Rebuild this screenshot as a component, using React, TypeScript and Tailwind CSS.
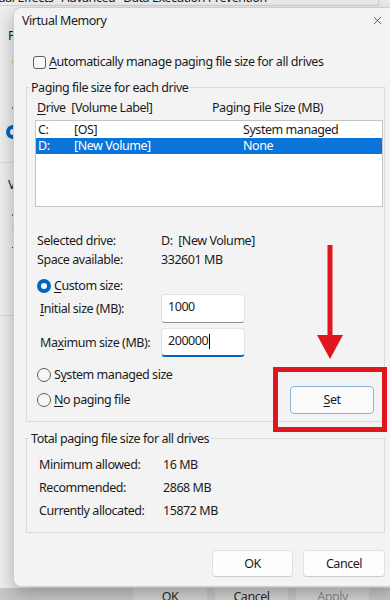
import { X } from 'lucide-react';

function Radio({ on }: { on?: boolean }) {
  if (on)
    return (
      <span className="flex h-[14px] w-[14px] shrink-0 items-center justify-center rounded-full bg-[#0067c0]">
        <span className="h-[6px] w-[6px] rounded-full bg-white" />
      </span>
    );
  return <span className="h-[14px] w-[14px] shrink-0 rounded-full border border-[#5d5d5d] bg-[#f6f6f6]" />;
}

function Key({ c }: { c: string }) {
  return <span className="underline decoration-[1px] underline-offset-[2px]">{c}</span>;
}

export default function App() {
  return (
    <div className="relative h-[600px] w-[390px] overflow-hidden bg-[#eeeeee] font-['Noto_Sans',sans-serif] text-[12.5px] leading-[16px] tracking-[-0.45px] text-[#1b1b1b]">
      {/* parent window: Performance Options */}
      <div className="flex h-full flex-col">
        <div className="-mt-[9px] flex h-[15px] w-[379px] items-center border-r border-b border-[#d4d4d4] whitespace-nowrap">
          <span className="-ml-[2px]">ual Effects</span>
          <span className="ml-[8px]">Advanced</span>
          <span className="ml-[8px]">Data Execution Prevention</span>
        </div>
        <div className="mt-[22px] h-[16px] pl-[8px]">Processor scheduling</div>
        <div className="mt-[10px] h-[16px] pl-[12px]">Choose how to allocate processor resources.</div>
        <div className="mt-[27px] h-[16px] pl-[12px]">Adjust for best performance of:</div>
        <div className="mt-[11px] flex h-[16px] items-center gap-[4px] pl-[6px]">
          <Radio on />
          <span>Programs</span>
        </div>
        <div className="mt-[22px] border-t border-[#dadada]" />
        <div className="mt-[14px] h-[16px] pl-[8px]">Virtual memory</div>
        <div className="mt-[11px] h-[16px] pl-[12px]">A paging file is an area on the hard disk that Windows uses as</div>
        <div className="h-[16px] pl-[12px]">if it were RAM.</div>
        <div className="mt-[8px] h-[16px] pl-[12px]">Total paging file size for all drives: 15872 MB</div>
        <div className="mt-[55px] border-t border-[#dadada]" />
        <div className="mt-auto flex h-[12px] gap-[8px] bg-[#c7c7c7] pl-[133px]">
          <div className="flex h-[20px] w-[74px] justify-center bg-[#d3d3d3] leading-[18px] text-[#2a2a2a]">OK</div>
          <div className="flex h-[20px] w-[73px] justify-center bg-[#d3d3d3] leading-[18px] text-[#2a2a2a]">Cancel</div>
          <div className="flex h-[20px] w-[73px] justify-center bg-[#d3d3d3] leading-[18px] text-[#8a8a8a]">Apply</div>
        </div>
      </div>

      {/* Virtual Memory dialog */}
      <div className="absolute top-[7px] left-[13px] flex h-[580px] w-[385px] flex-col rounded-[8px] border border-[#cdcdcd] bg-[#f3f3f3] shadow-[0_6px_18px_rgba(0,0,0,0.28)]">
        <div className="flex h-[25px] items-center justify-between pr-[13px] pl-[8px]">
          <span>Virtual Memory</span>
          <X size={13} strokeWidth={1.2} className="text-[#1b1b1b]" />
        </div>

        <div className="mt-[19px] flex h-[20px] items-center gap-[3px] pl-[19px]">
          <span className="h-[13px] w-[13px] rounded-[3px] border border-[#5d5d5d] bg-[#f8f8f8]" />
          <span>
            <Key c="A" />utomatically manage paging file size for all drives
          </span>
        </div>

        <fieldset className="mx-[12px] mt-[7px] border border-[#dadada] pr-[1px] pb-[7px] pl-[8px]">
          <legend className="-ml-[6px] px-[2px] leading-[17px]">Paging file size for each drive</legend>
          <div className="mt-[4px] flex h-[16px]">
            <span className="w-[177px] pl-[2px] whitespace-pre">
              <Key c="D" />rive  [Volume Label]
            </span>
            <span>Paging File Size (MB)</span>
          </div>
          <div className="mt-[4px] h-[87px] border border-[#c4c4c4] bg-white pt-[1px]">
            <div className="flex h-[16px]">
              <span className="w-[38px] pl-[2px]">C:</span>
              <span className="w-[169px]">[OS]</span>
              <span>System managed</span>
            </div>
            <div className="flex h-[16px] bg-[#0a74d8] text-white">
              <span className="w-[38px] pl-[2px]">D:</span>
              <span className="w-[169px]">[New Volume]</span>
              <span>None</span>
            </div>
          </div>

          <div className="mt-[24px] flex h-[19px] items-center">
            <span className="w-[126px] pl-[2px]">Selected drive:</span>
            <span className="whitespace-pre">D:  [New Volume]</span>
          </div>
          <div className="flex h-[19px] items-center">
            <span className="w-[126px] pl-[2px]">Space available:</span>
            <span>332601 MB</span>
          </div>

          <div className="mt-[8px] flex h-[17px] items-center gap-[3px] pl-[2px]">
            <Radio on />
            <span>
              <Key c="C" />ustom size:
            </span>
          </div>
          <div className="flex h-[29px] items-center">
            <span className="w-[126px] pl-[5px]">
              <Key c="I" />nitial size (MB):
            </span>
            <div className="flex h-[29px] w-[84px] items-center rounded-[4px] border border-[#e3e3e3] border-b-[#8d8d8d] bg-white pb-[3px] pl-[6px]">
              1000
            </div>
          </div>
          <div className="mt-[5px] flex h-[29px] items-center">
            <span className="w-[126px] pl-[5px]">
              Ma<Key c="x" />imum size (MB):
            </span>
            <div className="flex h-[29px] w-[84px] items-center rounded-[4px] border border-[#e3e3e3] border-b-2 border-b-[#0067c0] bg-white pb-[2px] pl-[6px]">
              200000
              <span className="ml-[1px] h-[15px] w-[1px] bg-black" />
            </div>
          </div>

          <div className="mt-[9px] flex justify-between">
            <div className="flex flex-col gap-[7px]">
              <div className="flex h-[18px] items-center gap-[3px] pl-[2px]">
                <Radio />
                <span>
                  S<Key c="y" />stem managed size
                </span>
              </div>
              <div className="flex h-[18px] items-center gap-[3px] pl-[2px]">
                <Radio />
                <span>
                  <Key c="N" />o paging file
                </span>
              </div>
            </div>
            <button className="mt-[20px] mr-[9px] h-[28px] w-[84px] rounded-[4px] border border-[#8db6da] bg-[#fbfbfb]">
              <Key c="S" />et
            </button>
          </div>
        </fieldset>

        <fieldset className="mx-[12px] mt-[8px] border border-[#dadada] pb-[10px] pl-[12px]">
          <legend className="-ml-[10px] px-[2px] leading-[17px]">Total paging file size for all drives</legend>
          <div className="mt-[6px] flex h-[23px] items-center">
            <span className="w-[124px]">Minimum allowed:</span>
            <span>16 MB</span>
          </div>
          <div className="flex h-[23px] items-center">
            <span className="w-[124px]">Recommended:</span>
            <span>2868 MB</span>
          </div>
          <div className="flex h-[23px] items-center">
            <span className="w-[124px]">Currently allocated:</span>
            <span>15872 MB</span>
          </div>
        </fieldset>

        <div className="mt-[17px] flex justify-end gap-[10px] pr-[12px]">
          <button className="h-[27px] w-[81px] rounded-[4px] border border-[#e1e1e1] border-b-[#cccccc] bg-[#fdfdfd]">OK</button>
          <button className="h-[27px] w-[82px] rounded-[4px] border border-[#e1e1e1] border-b-[#cccccc] bg-[#fdfdfd]">Cancel</button>
        </div>
      </div>

      {/* red annotation */}
      <svg className="pointer-events-none absolute top-0 left-0" width="390" height="600">
        <rect x="327.5" y="245" width="5" height="92" fill="#e0161e" />
        <polygon points="317,335 343,335 330,359" fill="#e0161e" />
        <rect x="275.5" y="369.5" width="109" height="60" fill="none" stroke="#e0161e" strokeWidth="5" />
      </svg>
    </div>
  );
}
